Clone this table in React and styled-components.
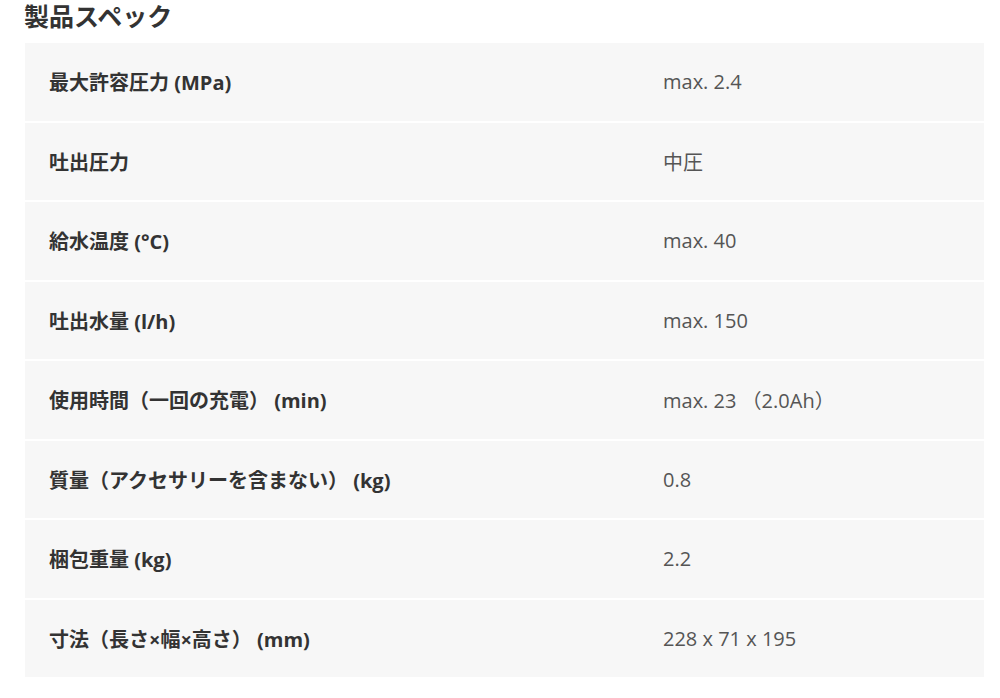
import React from "react";
import styled, { createGlobalStyle } from "styled-components";

const GlobalStyle = createGlobalStyle`
  body {
    margin: 0;
    background: #fff;
    font-family: "Open Sans", "Noto Sans CJK JP", sans-serif;
  }
`;

const Section = styled.section`
  padding: 0 16px 0 25px;
`;

const Title = styled.h2`
  margin: 0 0 11px -1px;
  font-size: 25px;
  line-height: 32px;
  font-weight: 700;
  color: #333;
`;

const Table = styled.div`
  display: flex;
  flex-direction: column;
  gap: 2px;
  width: 959px;
`;

const Row = styled.div`
  display: grid;
  grid-template-columns: 613px 1fr;
  align-items: center;
  height: 77.5px;
  padding-left: 24px;
  background: #f7f7f7;
`;

const Label = styled.div`
  font-size: 20px;
  font-weight: 700;
  color: #333;
`;

const Value = styled.div`
  padding-left: 1px;
  font-size: 20px;
  color: #555;
`;

const specs = [
  ["最大許容圧力 (MPa)", "max. 2.4"],
  ["吐出圧力", "中圧"],
  ["給水温度 (°C)", "max. 40"],
  ["吐出水量 (l/h)", "max. 150"],
  ["使用時間（一回の充電） (min)", "max. 23 （2.0Ah）"],
  ["質量（アクセサリーを含まない） (kg)", "0.8"],
  ["梱包重量 (kg)", "2.2"],
  ["寸法（長さ×幅×高さ） (mm)", "228 x 71 x 195"],
];

const App = () => (
  <Section>
    <GlobalStyle />
    <Title>製品スペック</Title>
    <Table>
      {specs.map(([label, value]) => (
        <Row key={label}>
          <Label>{label}</Label>
          <Value>{value}</Value>
        </Row>
      ))}
    </Table>
  </Section>
);

export default App;
